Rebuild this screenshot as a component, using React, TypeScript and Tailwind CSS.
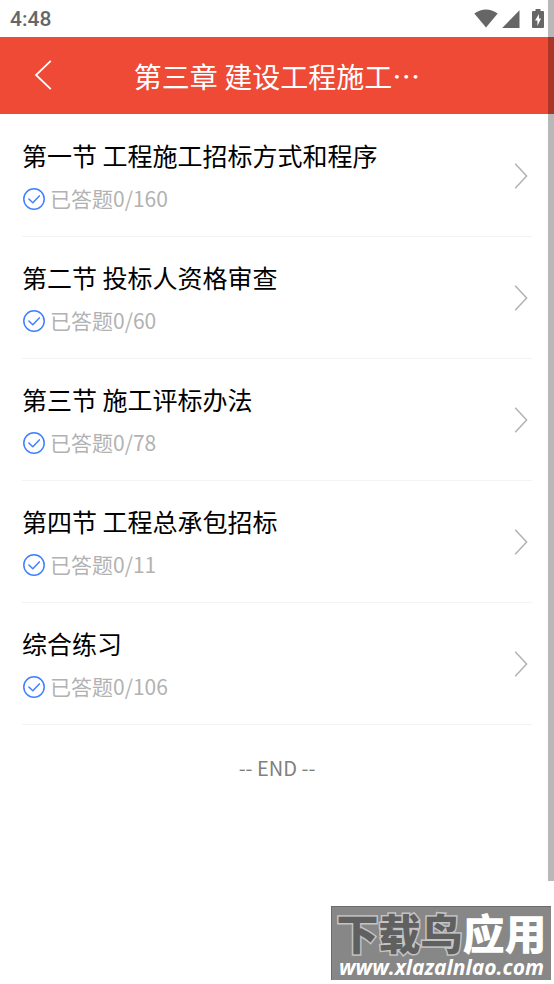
import React from "react";

interface Section {
  id: number;
  title: string;
  done: number;
  total: number;
}

const sections: Section[] = [
  { id: 1, title: "第一节 工程施工招标方式和程序", done: 0, total: 160 },
  { id: 2, title: "第二节 投标人资格审查", done: 0, total: 60 },
  { id: 3, title: "第三节 施工评标办法", done: 0, total: 78 },
  { id: 4, title: "第四节 工程总承包招标", done: 0, total: 11 },
  { id: 5, title: "综合练习", done: 0, total: 106 },
];

function StatusBar() {
  return (
    <div className="flex h-[37px] items-center justify-between bg-white pl-2.5 pr-2.5 text-[#666666]">
      <span className="font-['Roboto',sans-serif] text-[21px] font-medium leading-6">4:48</span>
      <div className="flex items-center">
        {/* Wifi */}
        <svg className="mr-1 h-5 w-6" viewBox="0 0 24 20" fill="currentColor" aria-hidden="true">
          <path d="M0.3 4.6 Q12 -3.4 23.7 4.6 L12 18.6 Z" />
        </svg>
        {/* Señal */}
        <svg className="mr-3 h-5 w-[18px]" viewBox="0 0 18 20" fill="currentColor" aria-hidden="true">
          <path d="M17.5 1.2 V19 H0.2 Z" />
        </svg>
        {/* Batería */}
        <svg className="h-5 w-3" viewBox="0 0 12 20" fill="currentColor" aria-hidden="true">
          <path
            fillRule="evenodd"
            d="M3.5 0 H8.5 V2 H11 Q12 2 12 3 V18 Q12 19 11 19 H1 Q0 19 0 18 V3 Q0 2 1 2 H3.5 Z M7 5 L3 11.6 H5.4 V17 L9 9.6 H7 Z"
          />
        </svg>
      </div>
    </div>
  );
}

function SectionRow({ section }: { section: Section }) {
  return (
    <li className="border-b border-[#f3f3f3]">
      <a href={`#section-${section.id}`} className="flex h-[121px] items-center justify-between pr-1">
        <div className="pt-0.5">
          <h2 className="text-[25px] font-normal leading-[34px] text-black">{section.title}</h2>
          <p className="mt-2 flex items-center gap-1 text-[21px] font-normal leading-9 text-[#b2b2b2]">
            <svg className="mt-0.5 h-6 w-6" viewBox="0 0 24 24" fill="none" stroke="#4080ff" strokeLinecap="round" strokeLinejoin="round" aria-hidden="true">
              <circle cx="12" cy="12" r="10.2" strokeWidth="1.5" />
              <path d="M6.9 12 L10.8 15.8 L17.3 8.9" strokeWidth="1.5" />
            </svg>
            <span>
              已答题{section.done}/{section.total}
            </span>
          </p>
        </div>
        <svg className="h-[26px] w-[15px]" viewBox="0 0 15 26" fill="none" stroke="#b2b2b2" strokeWidth="1.5" aria-hidden="true">
          <path d="M2.2 0.8 L13.6 13 L2.2 25.2" />
        </svg>
      </a>
    </li>
  );
}

// Marca de agua de la esquina inferior
function Watermark() {
  return (
    <div className="absolute bottom-1 right-[3px] flex h-[74px] w-[220px] flex-col items-center border-l border-t border-[#6b6b6b] bg-[#878787] text-white">
      <p className="whitespace-nowrap font-['Noto_Sans_CJK_SC',sans-serif] text-[42px] font-black leading-[50px]">
        <span className="text-[#606060] [paint-order:stroke_fill] [-webkit-text-stroke:3px_#c4c4c4]">下载鸟</span>
        <span>应用</span>
      </p>
      <p className="whitespace-nowrap font-['Open_Sans',sans-serif] text-[21px] font-bold italic leading-5">
        www.xlazalnlao.com
      </p>
    </div>
  );
}

function App() {
  return (
    <div lang="zh-CN" className="relative min-h-screen overflow-hidden bg-white font-['Noto_Sans_CJK_SC',sans-serif]">
      <StatusBar />

      <header className="grid h-[77px] grid-cols-[86px_1fr_86px] items-center bg-[#ee4a36] text-white">
        <button type="button" aria-label="返回" className="flex h-full items-center justify-center">
          <svg className="h-8 w-[18px]" viewBox="0 0 18 32" fill="none" stroke="currentColor" strokeWidth="1.8" aria-hidden="true">
            <path d="M16.8 0.8 L2 15 L16.8 29.2" />
          </svg>
        </button>
        <h1 className="truncate text-center text-[28px] font-normal leading-10">第三章 建设工程施工…</h1>
      </header>

      <main className="px-[22px] pt-px">
        <ul>
          {sections.map((section) => (
            <SectionRow key={section.id} section={section} />
          ))}
        </ul>
        <p className="py-7 text-center text-xl font-normal leading-[30px] text-[#808080]">-- END --</p>
      </main>

      {/* Barra de desplazamiento */}
      <div className="absolute right-0 top-0 h-[881px] w-1.5 bg-black/28" />
      <Watermark />
    </div>
  );
}

export default App;
